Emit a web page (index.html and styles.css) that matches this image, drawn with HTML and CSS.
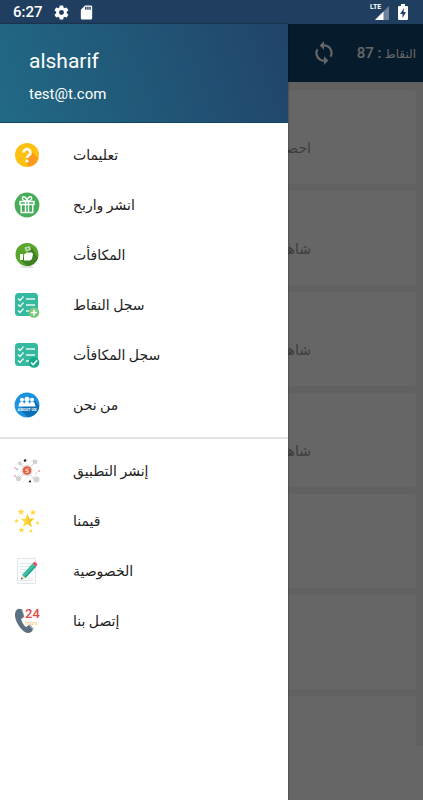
FILE: index.html
```html
<!DOCTYPE html>
<html lang="ar">
<head>
    <meta charset="UTF-8">
    <meta name="viewport" content="width=device-width, initial-scale=1.0">
    <title>alsharif</title>
    <link rel="stylesheet" href="styles.css">
</head>
<body>
    <div class="status-bar">
        <span class="clock">6:27</span>
        <svg class="status-icon" viewBox="0 0 24 24" fill="#fff"><path d="M19.4 13a7.500 7.500 0 0 0 0-2l2.100-1.700a.5.5 0 0 0 .1-.6l-2-3.500a.5.5 0 0 0-.6-.2l-2.500 1a7.300 7.300 0 0 0-1.700-1l-.4-2.600a.5.5 0 0 0-.5-.4h-4a.5.5 0 0 0-.5.4L9 5a7.300 7.300 0 0 0-1.700 1l-2.500-1a.5.5 0 0 0-.6.2l-2 3.500a.5.5 0 0 0 .1.6L4.500 11a7.500 7.500 0 0 0 0 2l-2.200 1.700a.5.5 0 0 0-.1.6l2 3.500c.1.2.4.3.6.2l2.500-1a7.300 7.300 0 0 0 1.700 1l.4 2.600c0 .2.2.4.5.4h4c.3 0 .5-.2.5-.4l.4-2.600a7.300 7.300 0 0 0 1.700-1l2.500 1c.2.1.5 0 .6-.2l2-3.500a.5.5 0 0 0-.1-.6zM12 15.500a3.500 3.500 0 1 1 0-7 3.500 3.500 0 0 1 0 7z"/></svg>
        <svg class="status-icon" viewBox="0 0 24 24" fill="#fff"><path d="M18 2h-8L4 8v12a2 2 0 0 0 2 2h12a2 2 0 0 0 2-2V4a2 2 0 0 0-2-2zm-6 6h-2V4h2zm3 0h-2V4h2zm3 0h-2V4h2z"/></svg>
        <div class="signal">
            <svg viewBox="0 0 20 18"><path d="M5 17 19 3v14z" fill="#6c819a"/><path d="M5 17l8.500-8.500V17z" fill="#fff"/></svg>
            <span class="lte">LTE</span>
        </div>
        <svg class="battery" viewBox="0 0 10 16"><path d="M3 0h4v2h2a1 1 0 0 1 1 1v12a1 1 0 0 1-1 1H1a1 1 0 0 1-1-1V3a1 1 0 0 1 1-1h2z" fill="#fff"/><path d="M6 4 2 10h2.500v4L8 8H5.500z" fill="#203f60"/></svg>
    </div>

    <div class="screen">
        <main class="page">
            <header class="app-bar">
                <button class="refresh" aria-label="تحديث">
                    <svg viewBox="0 0 24 24" fill="#fff"><path d="M12 4V1L8 5l4 4V6a6 6 0 0 1 5.250 8.800l1.460 1.460A8 8 0 0 0 12 4zm0 14a6 6 0 0 1-5.250-8.800L5.290 7.740A8 8 0 0 0 12 20v3l4-4-4-4z"/></svg>
                </button>
                <span class="points" dir="rtl">النقاط <span class="points-value">: 87</span></span>
            </header>
            <div class="card-list" dir="rtl">
                <div class="card">احصل</div>
                <div class="card">شاهد</div>
                <div class="card">شاهد</div>
                <div class="card">شاهد</div>
                <div class="card"></div>
                <div class="card"></div>
                <div class="card"></div>
            </div>
            <div class="banner"></div>
        </main>
        <div class="scrim"></div>

        <aside class="drawer">
            <div class="drawer-header">
                <div class="user-name">alsharif</div>
                <div class="user-mail">test@t.com</div>
            </div>
            <nav class="menu">
                <a class="menu-item" href="#help">
                    <svg viewBox="0 0 26 26"><circle cx="13" cy="13" r="12" fill="#ffc010"/><path d="M16 8l8.500 8.500A12 12 0 0 1 15 24.800L12 20l2-5z" fill="#fb9a1f"/><path d="M9.500 10.500a3.500 3.300 0 1 1 5.500 2.700c-1.200.9-2 1.300-2 2.800" fill="none" stroke="#fff" stroke-width="2.600"/><circle cx="13" cy="19" r="1.600" fill="#fff"/></svg>
                    <span>تعليمات</span>
                </a>
                <a class="menu-item" href="#share-win">
                    <svg viewBox="0 0 26 26"><circle cx="13" cy="13" r="12.400" fill="#47ad5b"/><g fill="none" stroke="#fff" stroke-width="1.400"><path d="M6 9.500h14v3H6zM7.200 12.500v8h11.600v-8M11.500 9.500v11M14.500 9.500v11"/><path d="M13 9C10 9 7.500 7.500 8.500 5.500S12.500 5.500 13 9c.5-3.500 3.500-5.500 4.500-3.500S16 9 13 9z"/></g></svg>
                    <span>انشر واربح</span>
                </a>
                <a class="menu-item" href="#rewards">
                    <svg viewBox="0 0 26 26"><ellipse cx="13" cy="25" rx="7" ry="1" fill="#ddd"/><circle cx="13" cy="12.500" r="11.500" fill="#5aa52e"/><path d="M18 6l6 10a12 12 0 0 1-11 8l-6-6z" fill="#3d8122"/><path d="M6 12h3v6H6zM10 12.500l3-2h5l1 1.500-1 5-2 1.500h-6z" fill="#fff"/><path d="M10.500 5.500l5-1.500 1.500 4-5 1.500z" fill="#c6dfb6"/><circle cx="13.700" cy="6.800" r="1" fill="#5aa52e"/></svg>
                    <span>المكافأت</span>
                </a>
                <a class="menu-item" href="#points-log">
                    <svg viewBox="0 0 26 26"><rect x="1" y="1" width="23" height="23" rx="3.500" fill="#35b9a0"/><path d="M4 6.500l2 2 3.500-4M4 12.500l2 2 3.500-4M4 18.500l2 2 3.500-4M12 7h9M12 13h9M12 19h4" fill="none" stroke="#e9f8ed" stroke-width="1.400"/><circle cx="20" cy="20.500" r="5.300" fill="#7bc77c"/><path d="M20 17.500v6M17 20.500h6" stroke="#fff" stroke-width="1.500"/></svg>
                    <span>سجل النقاط</span>
                </a>
                <a class="menu-item" href="#rewards-log">
                    <svg viewBox="0 0 26 26"><rect x="1" y="1" width="23" height="23" rx="3.500" fill="#35b9a0"/><path d="M4 6.500l2 2 3.500-4M4 12.500l2 2 3.500-4M4 18.500l2 2 3.500-4M12 7h9M12 13h9M12 19h4" fill="none" stroke="#e9f8ed" stroke-width="1.400"/><circle cx="20" cy="20.500" r="5.300" fill="#14a987"/><path d="M17 20.500l2.200 2.200 4-4.500" fill="none" stroke="#fff" stroke-width="1.500"/></svg>
                    <span>سجل المكافأت</span>
                </a>
                <a class="menu-item" href="#about">
                    <svg viewBox="0 0 26 26"><circle cx="13" cy="13" r="12.400" fill="#1c93e0"/><path d="M21 9l4.300 5A12.400 12.400 0 0 1 14 25.300L5 17z" fill="#0d6fb4"/><g fill="#fff"><circle cx="8" cy="7.800" r="2"/><circle cx="18" cy="7.800" r="2"/><circle cx="13" cy="7.300" r="2.500"/><path d="M4.500 14.500c0-6 5-6 5.800-2.500 0-3.500 5.400-3.500 5.400 0 .8-3.500 5.800-3.500 5.800 2.500z"/></g><text class="about-label" x="13" y="18.500" text-anchor="middle">ABOUT US</text></svg>
                    <span>من نحن</span>
                </a>
                <hr class="divider">
                <a class="menu-item" href="#share-app">
                    <svg viewBox="0 0 26 26"><path d="M1 8l7-7M1 14L14 1M1 20L20 1M2 25L25 2M8 25L25 8M14 25l11-11" stroke="#efefef" stroke-width="1"/><path d="M6 5l15 17M21 4L4 21" stroke="#d2d2d2" stroke-width="1"/><g fill="#d2d2d2"><circle cx="6" cy="5.500" r="2"/><circle cx="21" cy="4" r="2.400"/><circle cx="4.500" cy="20.500" r="2.600"/><circle cx="22.500" cy="21.500" r="3"/><circle cx="13" cy="12.500" r="5.400"/></g><circle cx="13" cy="12.500" r="4" fill="#ee5330"/><path d="M14.800 11h-3v1.700h2.500v1.700h-3" fill="none" stroke="#fff" stroke-width=".8"/><g fill="#222"><circle cx="11" cy="2.500" r="1.300"/><circle cx="16" cy="23.500" r="1.100"/><circle cx="3" cy="11" r=".6"/></g><g fill="#ee5330"><circle cx="1" cy="10" r=".7"/><circle cx="1" cy="18" r=".7"/><circle cx="25" cy="13" r=".8"/><circle cx="22" cy="15" r=".5"/></g></svg>
                    <span>إنشر التطبيق</span>
                </a>
                <a class="menu-item" href="#values">
                    <svg viewBox="0 0 26 26"><defs><path id="star" d="M0-10 2.500-3.200 9.500-3 4 1.400 6 8.200 0 4.200-6 8.200-4 1.400-9.500-3-2.500-3.200z"/></defs><g fill="#ffd83b"><use href="#star" transform="translate(13.500 13) scale(.74)"/><use href="#star" transform="translate(7 4) scale(.36)"/><use href="#star" transform="translate(19 4.500) scale(.32)"/><use href="#star" transform="translate(2.500 13) scale(.25)"/><use href="#star" transform="translate(23.500 15) scale(.22)"/><use href="#star" transform="translate(7.500 22) scale(.32)"/><use href="#star" transform="translate(17 23) scale(.22)"/></g><path d="M13.500 5.800v10.200l4.300 2.900-1.400-4.900 3.900-3.200-5-.1z" fill="#f7c62c"/></svg>
                    <span>قيمنا</span>
                </a>
                <a class="menu-item" href="#privacy">
                    <svg viewBox="0 0 26 26"><path d="M3.500.5h18v25h-18z" fill="#fafbfc" stroke="#e1e6e9"/><path d="M6 5.500h13M6 8.500h11M6 11.500h9M6 14.500h6M14 20.500h5M6 22.500h13" stroke="#e3e8eb"/><path d="M8 17L18.500 5.500l3.500 3L11.500 20z" fill="#37bfa3"/><path d="M10.500 19.200L21 7.700l1 .8L11.500 20z" fill="#229c86"/><path d="M18.500 5.500l1.300-1.300q1.200-.5 2.700 1 1.200 1 .7 2.100L22 8.500z" fill="#e35060"/><path d="M8 17l3.500 3-4.500 1.500z" fill="#f0d6a8"/><path d="M7.400 19.500l1.600 1.400-2 .7z" fill="#34434b"/></svg>
                    <span>الخصوصية</span>
                </a>
                <a class="menu-item" href="#contact">
                    <svg viewBox="0 0 26 26"><path d="M4 1C.5 2.500.2 8 2.500 13.500S10 25 14 25q3.500 0 5-3.500L15 17l-3 2q-3-2-5-8l3-2L8 1.500Q6 .2 4 1z" fill="#5b7083"/><path d="M7.500 1l2.500 7.500M15.500 16.500l4 4.500" stroke="#8797a5" stroke-width="1"/><text class="hours-number" x="11" y="10">24</text><text class="hours-label" x="11" y="17">hours</text></svg>
                    <span>إتصل بنا</span>
                </a>
            </nav>
        </aside>
    </div>
</body>
</html>
```
FILE: styles.css
```css
* {
    box-sizing: border-box;
}
body {
    margin: 0;
    height: 100vh;
    display: flex;
    flex-direction: column;
    overflow: hidden;
    font-family: Roboto, "Noto Sans", "DejaVu Sans", sans-serif;
    background-color: #fff;
}
.status-bar {
    display: flex;
    align-items: center;
    gap: 8px;
    height: 24px;
    padding: 0 15px 0 13px;
    background-color: #203f60;
    color: #fff;
}
.clock {
    font-size: 15px;
    font-weight: 500;
    margin-right: 2px;
}
.status-icon {
    width: 17px;
    height: 17px;
}
.signal {
    position: relative;
    width: 20px;
    height: 18px;
    margin-left: auto;
}
.signal svg {
    display: block;
}
.lte {
    position: absolute;
    top: 0;
    left: 0;
    font-size: 7px;
    line-height: 8px;
    font-weight: bold;
}
.battery {
    width: 10px;
    height: 16px;
}
.screen {
    position: relative;
    flex: 1;
    min-height: 0;
}
.page {
    display: flex;
    flex-direction: column;
    height: 100%;
}
.app-bar {
    display: flex;
    align-items: center;
    justify-content: flex-end;
    gap: 20px;
    height: 58px;
    padding: 0 7px;
    background-color: #0f446c;
    color: #fff;
}
.refresh {
    width: 26px;
    height: 26px;
    padding: 0;
    border: none;
    background: none;
    cursor: pointer;
}
.refresh svg {
    display: block;
}
.points {
    font-size: 12px;
}
.points-value {
    font-size: 15px;
    font-weight: 500;
}
.card-list {
    flex: 1;
    display: flex;
    flex-direction: column;
    gap: 7px;
    padding: 8px 7px 0;
    overflow: hidden;
    background-color: #f3f3f3;
}
.card {
    flex: none;
    height: 94px;
    padding: 46px 105px 0 0;
    border-radius: 3px;
    background-color: #fff;
    color: #999;
    font-size: 14px;
    line-height: 24px;
}
.banner {
    height: 54px;
}
.scrim {
    position: absolute;
    inset: 0;
    background-color: rgba(0, 0, 0, 0.6);
}
.drawer {
    position: absolute;
    top: 0;
    bottom: 0;
    left: 0;
    width: 68%;
    background-color: #fff;
    box-shadow: 0 0 2px rgba(0, 0, 0, 0.5);
}
.drawer-header {
    height: 99px;
    padding: 24px 29px 0;
    border-bottom: 1px solid #0f446c;
    background-image: linear-gradient(70deg, #216a85, #21436a);
    color: #fff;
}
.user-name {
    font-size: 21px;
    line-height: 26px;
}
.user-mail {
    margin-top: 8px;
    font-size: 15px;
    line-height: 24px;
}
.menu {
    padding-top: 7px;
}
.menu-item {
    display: flex;
    align-items: center;
    gap: 33px;
    height: 50px;
    padding-left: 14px;
    color: #222;
    font-size: 14px;
    text-decoration: none;
}
.menu-item svg {
    width: 26px;
    height: 26px;
    overflow: visible;
}
.divider {
    height: 2px;
    margin: 7px 0;
    border: none;
    background-color: #e3e3e3;
}
.about-label {
    font-size: 4px;
    font-weight: bold;
    fill: #fff;
}
.hours-number {
    font-size: 13px;
    font-weight: 500;
    fill: #e04a45;
}
.hours-label {
    font-size: 5px;
    fill: #f5c96b;
}
```
